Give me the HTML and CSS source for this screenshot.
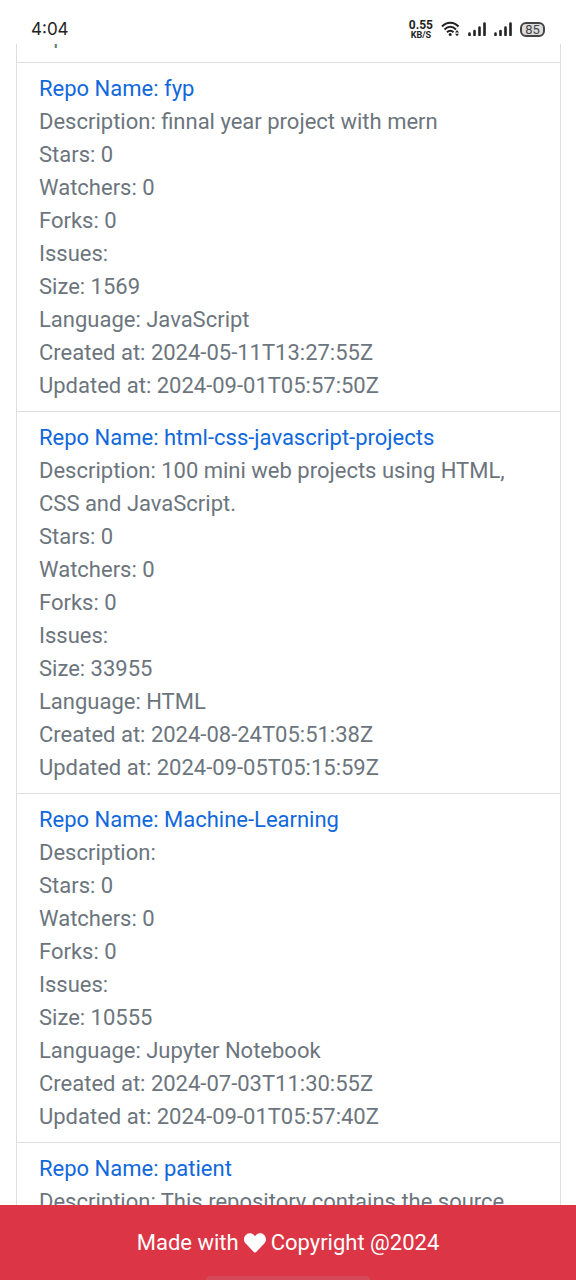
FILE: index.html
```html
<!DOCTYPE html>
<html lang="en">
<head>
<meta charset="utf-8">
<meta name="viewport" content="width=device-width, initial-scale=1">
<title>Repositories</title>
<link rel="stylesheet" href="styles.css">
</head>
<body>
<div class="screen">
  <header class="status">
    <span class="clock">4:04</span>
    <div class="indicators">
      <div class="speed"><span class="speed-value">0.55</span><span class="speed-unit">KB/S</span></div>
      <svg class="wifi" width="19" height="16" viewBox="0 0 19 16" aria-hidden="true">
        <g fill="none" stroke="#222" stroke-width="2">
          <path d="M1 5.500C6 .5 12.500 .5 17.500 5.500"/>
          <path d="M3.500 8.500C7.300 4.800 11.200 4.800 15 8.500"/>
          <path d="M6 11.300C8 9.200 10.500 9.200 12.500 11.300"/>
        </g>
        <circle cx="9.200" cy="13.500" r="1.500" fill="#222"/>
        <path d="M14 11.500l2-2.500 2 2.500zM14 12.800h4l-2 2.500z" fill="#222"/>
      </svg>
      <svg class="signal" width="18" height="14" viewBox="0 0 18 14" aria-hidden="true">
        <path d="M1.500 11.500V13M6.500 9V13M11.500 5.500V13M16.500 1.500V13" stroke="#222" stroke-width="2.600" stroke-linecap="round"/>
      </svg>
      <svg class="signal" width="18" height="14" viewBox="0 0 18 14" aria-hidden="true">
        <path d="M1.500 11.500V13M6.500 9V13M11.500 5.500V13M16.500 1.500V13" stroke="#222" stroke-width="2.600" stroke-linecap="round"/>
      </svg>
      <span class="battery">85</span>
    </div>
  </header>

  <main class="content">
    <ul class="repos">
      <li class="repo">
        <div>Updated at:</div>
      </li>
      <li class="repo">
        <a class="repo-link" href="#fyp">Repo Name: fyp</a>
        <div>Description: finnal year project with mern</div>
        <div>Stars: 0</div>
        <div>Watchers: 0</div>
        <div>Forks: 0</div>
        <div>Issues:</div>
        <div>Size: 1569</div>
        <div>Language: JavaScript</div>
        <div>Created at: 2024-05-11T13:27:55Z</div>
        <div>Updated at: 2024-09-01T05:57:50Z</div>
      </li>
      <li class="repo">
        <a class="repo-link" href="#html-css-javascript-projects">Repo Name: html-css-javascript-projects</a>
        <div>Description: 100 mini web projects using HTML, CSS and JavaScript.</div>
        <div>Stars: 0</div>
        <div>Watchers: 0</div>
        <div>Forks: 0</div>
        <div>Issues:</div>
        <div>Size: 33955</div>
        <div>Language: HTML</div>
        <div>Created at: 2024-08-24T05:51:38Z</div>
        <div>Updated at: 2024-09-05T05:15:59Z</div>
      </li>
      <li class="repo">
        <a class="repo-link" href="#machine-learning">Repo Name: Machine-Learning</a>
        <div>Description:</div>
        <div>Stars: 0</div>
        <div>Watchers: 0</div>
        <div>Forks: 0</div>
        <div>Issues:</div>
        <div>Size: 10555</div>
        <div>Language: Jupyter Notebook</div>
        <div>Created at: 2024-07-03T11:30:55Z</div>
        <div>Updated at: 2024-09-01T05:57:40Z</div>
      </li>
      <li class="repo">
        <a class="repo-link" href="#patient">Repo Name: patient</a>
        <div>Description: This repository contains the source</div>
      </li>
    </ul>
  </main>

  <footer class="footer">
    <span>Made with</span>
    <svg class="heart" width="22" height="22" viewBox="0 0 512 512" aria-hidden="true">
      <path fill="#fff" d="M462.300 62.600C407.500 15.900 326 24.300 275.700 76.200L256 96.500l-19.700-20.300C186.100 24.300 104.500 15.900 49.700 62.600c-62.800 53.600-66.100 149.800-9.900 207.900l193.500 199.800c12.500 12.900 32.800 12.900 45.300 0l193.500-199.800c56.300-58.100 53-154.300-9.800-207.900z"/>
    </svg>
    <span>Copyright @2024</span>
    <div class="home-bar"></div>
  </footer>
</div>
</body>
</html>
```
FILE: styles.css
```css
* {
  box-sizing: border-box;
}

body {
  margin: 0;
  background: #fff;
  color: #6c757d;
  font-family: Roboto, "Liberation Sans", sans-serif;
  font-size: 22px;
  line-height: 33px;
}

.screen {
  display: flex;
  flex-direction: column;
  height: 100vh;
  overflow: hidden;
}

.status {
  display: flex;
  flex: none;
  align-items: center;
  justify-content: space-between;
  height: 44px;
  padding: 14px 31px 0;
  color: #222;
}

.clock {
  font-family: Inter, sans-serif;
  font-size: 17px;
  line-height: 20px;
}

.indicators {
  display: flex;
  align-items: center;
  gap: 8px;
}

.speed {
  display: flex;
  flex-direction: column;
  align-items: center;
  font-weight: 700;
}

.speed-value {
  font-size: 12px;
  line-height: 11px;
}

.speed-unit {
  font-size: 9px;
  line-height: 8px;
}

.battery {
  width: 25px;
  height: 15px;
  border: 2px solid #444;
  border-radius: 6px;
  background: #ddd;
  color: #444;
  font-size: 13px;
  line-height: 11px;
  text-align: center;
}

.content {
  flex: 1;
  min-height: 0;
  overflow: hidden;
}

.repos {
  margin: -26px 15px 0 16px;
  padding: 0;
  border: 1px solid #dfdfdf;
  list-style: none;
}

.repo {
  padding: 9px 22px;
  border-bottom: 1px solid #dfdfdf;
}

.repo:first-child {
  padding: 0 22px 10px;
}

.repo-link {
  display: block;
  color: #1068dc;
  text-decoration: none;
}

.footer {
  position: relative;
  display: flex;
  flex: none;
  align-items: center;
  justify-content: center;
  gap: 5px;
  height: 75px;
  background: #dc3545;
  color: #fff;
}

.home-bar {
  position: absolute;
  bottom: 0;
  left: 50%;
  width: 164px;
  height: 4px;
  margin-left: -82px;
  border-radius: 4px 4px 0 0;
  background: #d4495a;
}
```
